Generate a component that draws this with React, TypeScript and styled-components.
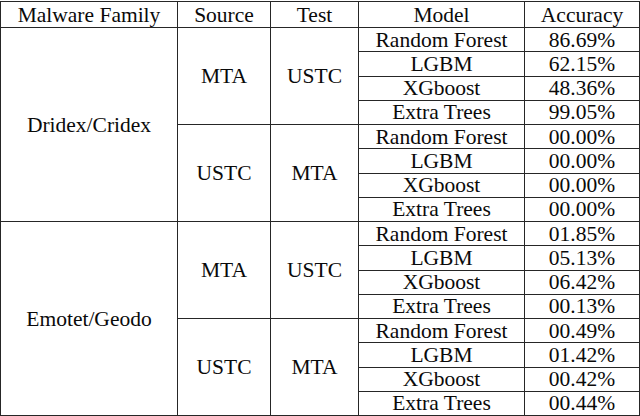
import React from 'react';
import styled, { createGlobalStyle } from 'styled-components';

const GlobalStyle = createGlobalStyle`
  html, body {
    margin: 0;
    padding: 0;
    background: #fff;
  }
`;

const Page = styled.div`
  width: 640px;
  height: 416px;
  padding: 1px 0 0 0;
  box-sizing: border-box;
  overflow: hidden;
`;

const Table = styled.table`
  width: 639px;
  border-collapse: collapse;
  table-layout: fixed;
`;

const HeadRow = styled.tr`
  height: 26px;
`;

const Row = styled.tr`
  height: 24.25px;
`;

const Cell = styled.td`
  border: 1.3px solid #262626;
  padding: 0;
  text-align: center;
  vertical-align: middle;
  line-height: 20px;
  white-space: nowrap;
  font-family: "Liberation Serif", "Times New Roman", serif;
  font-size: 21.5px;
  font-weight: normal;
  color: #0a0a0a;
`;

interface Group {
  source: string;
  test: string;
  results: [string, string][];
}

interface Family {
  name: string;
  groups: Group[];
}

const models = ['Random Forest', 'LGBM', 'XGboost', 'Extra Trees'];

function zip(acc: string[]): [string, string][] {
  return models.map((m, i) => [m, acc[i]]);
}

const families: Family[] = [
  {
    name: 'Dridex/Cridex',
    groups: [
      { source: 'MTA', test: 'USTC', results: zip(['86.69%', '62.15%', '48.36%', '99.05%']) },
      { source: 'USTC', test: 'MTA', results: zip(['00.00%', '00.00%', '00.00%', '00.00%']) },
    ],
  },
  {
    name: 'Emotet/Geodo',
    groups: [
      { source: 'MTA', test: 'USTC', results: zip(['01.85%', '05.13%', '06.42%', '00.13%']) },
      { source: 'USTC', test: 'MTA', results: zip(['00.49%', '01.42%', '00.42%', '00.44%']) },
    ],
  },
];

const headers = ['Malware Family', 'Source', 'Test', 'Model', 'Accuracy'];

function App() {
  return (
    <Page>
      <GlobalStyle />
      <Table>
        <colgroup>
          <col style={{ width: 177 }} />
          <col style={{ width: 93 }} />
          <col style={{ width: 88 }} />
          <col style={{ width: 166 }} />
          <col style={{ width: 115 }} />
        </colgroup>
        <thead>
          <HeadRow>
            {headers.map((h) => (
              <Cell as="th" key={h}>{h}</Cell>
            ))}
          </HeadRow>
        </thead>
        <tbody>
          {families.map((fam) =>
            fam.groups.map((g, gi) =>
              g.results.map(([model, acc], ri) => (
                <Row key={`${fam.name}-${gi}-${ri}`}>
                  {gi === 0 && ri === 0 && <Cell rowSpan={8}>{fam.name}</Cell>}
                  {ri === 0 && <Cell rowSpan={4}>{g.source}</Cell>}
                  {ri === 0 && <Cell rowSpan={4}>{g.test}</Cell>}
                  <Cell>{model}</Cell>
                  <Cell>{acc}</Cell>
                </Row>
              ))
            )
          )}
        </tbody>
      </Table>
    </Page>
  );
}

export default App;
